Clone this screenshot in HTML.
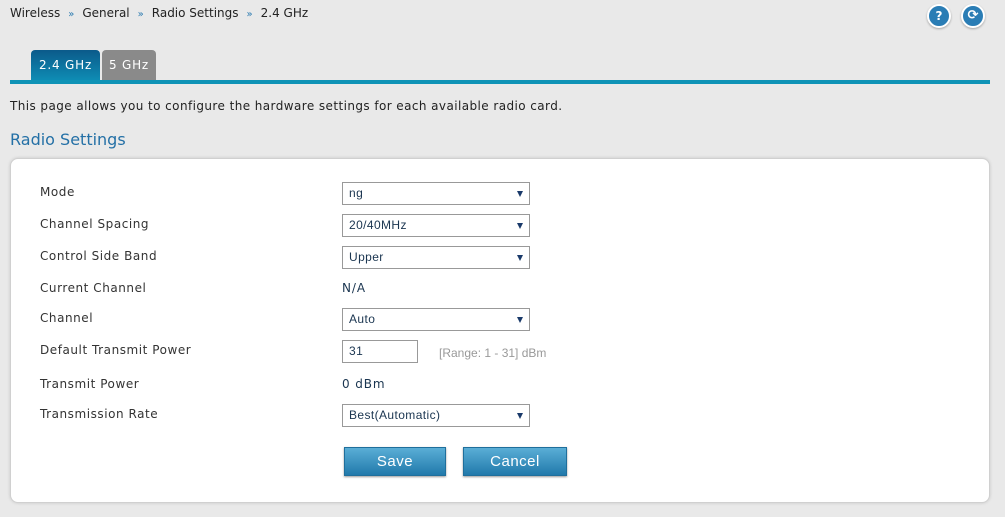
<!DOCTYPE html>
<html><head><style>
body{margin:0;width:1005px;height:517px;background:#e9e9e9;font-family:"DejaVu Sans","Liberation Sans",sans-serif;position:relative;overflow:hidden;color:#333}
.a{position:absolute;white-space:nowrap}
.bc{font-size:12px;color:#222;top:6px;left:10px}
.bc span{color:#2a7ab0;margin:0 8px;font-size:10px}
.tab{position:absolute;top:50px;height:30px;border-radius:4px 4px 0 0;color:#fff;font-size:12px;line-height:30px;text-align:center;letter-spacing:.8px}
.lbl{font-size:12px;color:#333;left:40px;letter-spacing:.55px}
.sel{position:absolute;left:342px;width:186px;height:21px;border:1px solid #999;background:#fff;font-family:"Liberation Sans",sans-serif;font-size:12px;color:#1a3550;line-height:21px;text-indent:6px;letter-spacing:.4px}
.sel.arr:after{content:"";position:absolute;right:6px;top:8px;border-left:3.5px solid transparent;border-right:3.5px solid transparent;border-top:6px solid #1a3a6a}
.val{font-size:12px;color:#1a3550;left:342px;letter-spacing:.9px}
.btn{position:absolute;top:447px;height:27px;background:linear-gradient(#5aaed6,#2179ab);border:1px solid #1f6f9c;box-shadow:0 1px 2px rgba(0,0,0,.4);color:#fff;font-family:"Liberation Sans",sans-serif;font-size:15px;text-align:center;line-height:27px;letter-spacing:.5px}
.ic{position:absolute;top:4px;width:20px;height:20px;border-radius:50%;background:#2a7db5;border:2px solid #fff;box-shadow:0 1px 2px rgba(0,0,0,.3);color:#fff;font-weight:bold;font-size:12px;text-align:center;line-height:20px}
</style></head><body>
<div class="a bc">Wireless<span>»</span>General<span>»</span>Radio Settings<span>»</span>2.4 GHz</div>
<div class="ic" style="left:927px">?</div>
<div class="ic" style="left:961px;font-size:13px">⟳</div>
<div class="tab" style="left:31px;width:69px;background:linear-gradient(#0b5a8a,#0e8cb4)">2.4 GHz</div>
<div class="tab" style="left:102px;width:54px;background:#8a8a8a">5 GHz</div>
<div class="a" style="left:10px;top:80px;width:980px;height:4px;background:#0f93b6"></div>
<div class="a" style="left:10px;top:99px;font-size:12px;color:#222;letter-spacing:.42px">This page allows you to configure the hardware settings for each available radio card.</div>
<div class="a" style="left:10px;top:130px;font-size:16px;color:#2470a6">Radio Settings</div>
<div class="a" style="left:10px;top:158px;width:978px;height:343px;background:#fff;border:1px solid #d0d0d0;border-radius:8px;box-shadow:0 0 3px rgba(0,0,0,.15)"></div>
<div class="a lbl" style="top:185px">Mode</div>
<div class="sel arr" style="top:182px">ng</div>
<div class="a lbl" style="top:217px">Channel Spacing</div>
<div class="sel arr" style="top:214px">20/40MHz</div>
<div class="a lbl" style="top:249px">Control Side Band</div>
<div class="sel arr" style="top:246px">Upper</div>
<div class="a lbl" style="top:281px">Current Channel</div>
<div class="a val" style="top:281px">N/A</div>
<div class="a lbl" style="top:311px">Channel</div>
<div class="sel arr" style="top:308px">Auto</div>
<div class="a lbl" style="top:343px">Default Transmit Power</div>
<div class="sel" style="top:340px;width:74px">31</div>
<div class="a" style="left:439px;top:346px;font-family:'Liberation Sans',sans-serif;font-size:12px;color:#999">[Range: 1 - 31] dBm</div>
<div class="a lbl" style="top:377px">Transmit Power</div>
<div class="a val" style="top:377px">0 dBm</div>
<div class="a lbl" style="top:407px">Transmission Rate</div>
<div class="sel arr" style="top:404px">Best(Automatic)</div>
<div class="btn" style="left:344px;width:100px">Save</div>
<div class="btn" style="left:463px;width:102px">Cancel</div>
</body></html>
